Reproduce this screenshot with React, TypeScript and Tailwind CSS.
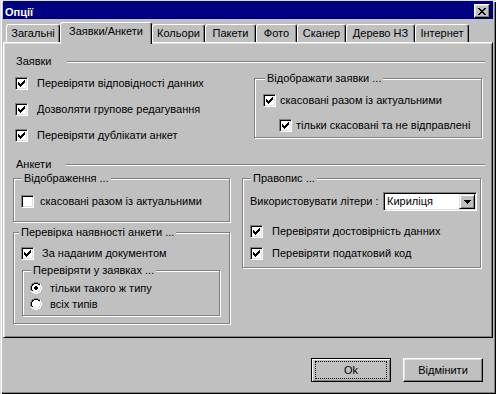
import React from 'react'

const CHECK = ['......X', '.....XX', 'X...XXX', 'XX.XXX.', 'XXXXX..', '.XXX...', '..X....']
const CLOSE = ['XX....XX', '.XX..XX.', '..XXXX..', '...XX...', '..XXXX..', '.XX..XX.', 'XX....XX']
const ARROW = ['XXXXXXX', '.XXXXX.', '..XXX..', '...X...']
const RADIO = [
  '....GGGG....',
  '..GGKKKKGG..',
  '.GKKwwwwKKW.',
  '.GKwwwwwwLW.',
  'GKwwwwwwwwLW',
  'GKwwwwwwwwLW',
  'GKwwwwwwwwLW',
  'GKwwwwwwwwLW',
  '.GKwwwwwwLW.',
  '.WLLwwwwLLW.',
  '..WWLLLLWW..',
  '....WWWW....'
]
const DOT = ['.XX.', 'XXXX', 'XXXX', '.XX.']

function Pixels ({ rows, colors, className = '' }: { rows: string[], colors: Record<string, string>, className?: string }): React.JSX.Element {
  const w = rows[0].length
  const h = rows.length
  return (
    <svg width={w} height={h} viewBox={`0 0 ${w} ${h}`} shapeRendering="crispEdges" className={`block shrink-0 ${className}`}>
      {rows.flatMap((r, y) => r.split('').map((c, x) => colors[c] !== undefined
        ? <rect key={`${x}-${y}`} x={x} y={y} width={1} height={1} fill={colors[c]} />
        : null))}
    </svg>
  )
}

function CheckBox ({ checked, label, gap }: { checked: boolean, label: string, gap: string }): React.JSX.Element {
  return (
    <div className="flex items-center h-[13px]">
      <span className="w-[13px] h-[13px] shrink-0 bg-white border border-t-[#808080] border-l-[#808080] border-b-white border-r-white shadow-[inset_1px_1px_#000,inset_-1px_-1px_#dfdfdf] flex items-center justify-center">
        {checked && <Pixels rows={CHECK} colors={{ X: '#000' }} />}
      </span>
      <span className={`leading-[13px] whitespace-nowrap ${gap}`}>{label}</span>
    </div>
  )
}

function Radio ({ checked, label }: { checked: boolean, label: string }): React.JSX.Element {
  return (
    <div className="flex items-center h-[12px]">
      <span className="relative w-[12px] h-[12px] shrink-0">
        <Pixels rows={RADIO} colors={{ G: '#808080', K: '#000', W: '#fff', L: '#dfdfdf', w: '#fff' }} />
        {checked && <Pixels rows={DOT} colors={{ X: '#000' }} className="absolute left-[4px] top-[4px]" />}
      </span>
      <span className="leading-[13px] whitespace-nowrap ml-[8px]">{label}</span>
    </div>
  )
}

function Group ({ label, labelLeft, className, children }: { label: string, labelLeft: string, className: string, children?: React.ReactNode }): React.JSX.Element {
  return (
    <div className={`relative border border-[#808080] shadow-[inset_1px_1px_#fff,1px_1px_#fff] ${className}`}>
      <span className={`absolute -top-[7px] px-[2px] bg-[#c0c0c0] leading-[13px] whitespace-nowrap ${labelLeft}`}>{label}</span>
      {children}
    </div>
  )
}

function Section ({ label, className }: { label: string, className: string }): React.JSX.Element {
  return (
    <div className={`flex items-center h-[13px] ml-[12px] mr-[7px] ${className}`}>
      <span className="leading-[13px]">{label}</span>
      <div className="flex-1 ml-[15px] h-[2px] border-t border-t-[#808080] border-b border-b-white" />
    </div>
  )
}

const tabs = [
  { label: 'Загальні', w: 'w-[54px]' },
  { label: 'Заявки/Анкети', w: 'w-[92px]', active: true },
  { label: 'Кольори', w: 'w-[53px]' },
  { label: 'Пакети', w: 'w-[51px]' },
  { label: 'Фото', w: 'w-[41px]' },
  { label: 'Сканер', w: 'w-[49px]' },
  { label: 'Дерево НЗ', w: 'w-[69px]' },
  { label: 'Інтернет', w: 'w-[54px]' }
]

export default function App (): React.JSX.Element {
  return (
    <div className="w-[496px] h-[394px] bg-[#c0c0c0] flex flex-col pt-[1px] px-[3px] text-[11px] text-black font-['Liberation_Sans',Arial,sans-serif] shadow-[inset_1px_1px_#dfdfdf,inset_2px_2px_#fff,inset_-1px_-1px_#000,inset_-2px_-2px_#808080]">
      {/* title */}
      <div className="h-[18px] bg-[#000080] flex items-center justify-between pl-[2px] pr-[3px]">
        <span className="self-end leading-[13px] font-bold text-white">Опції</span>
        <span className="w-[16px] h-[14px] mt-[2px] bg-[#c0c0c0] border border-t-white border-l-white border-b-black border-r-black shadow-[inset_-1px_-1px_#808080,inset_1px_1px_#dfdfdf] flex items-center justify-center">
          <Pixels rows={CLOSE} colors={{ X: '#000' }} />
        </span>
      </div>

      {/* tabs */}
      <div className="mt-[3px] h-[20px] flex items-end pl-[3px]">
        {tabs.map(t => (
          <div
            key={t.label}
            className={`${t.w} flex justify-center items-start pt-[2px] bg-[#c0c0c0] border-l border-t border-r border-l-white border-t-white border-r-black rounded-t-[3px] shadow-[inset_-1px_0_#808080] ${t.active === true ? 'relative z-10 h-[22px] -mb-[2px]' : 'h-[18px]'}`}
          >
            <span className="leading-[13px] whitespace-nowrap">{t.label}</span>
          </div>
        ))}
      </div>

      {/* panel */}
      <div className="h-[296px] flex flex-col border border-t-white border-l-white border-b-black border-r-black shadow-[inset_1px_1px_#dfdfdf,inset_-1px_-1px_#808080]">
        <Section label="Заявки" className="mt-[12px]" />
        <div className="flex h-[65px] mt-[9px]">
          <div className="ml-[11px] w-[239px] flex flex-col gap-[13px]">
            <CheckBox checked label="Перевіряти відповідності данних" gap="ml-[9px]" />
            <CheckBox checked label="Дозволяти групове редагування" gap="ml-[9px]" />
            <CheckBox checked label="Перевіряти дублікати анкет" gap="ml-[9px]" />
          </div>
          <Group label="Відображати заявки ..." labelLeft="left-[10px]" className="w-[228px] h-[60px] mt-[1px] pl-[8px] pt-[15px]">
            <CheckBox checked label="скасовані разом із актуальними" gap="ml-[4px]" />
            <div className="ml-[16px] mt-[12px]">
              <CheckBox checked label="тільки скасовані та не відправлені" gap="ml-[4px]" />
            </div>
          </Group>
        </div>

        <Section label="Анкети" className="mt-[16px]" />
        <div className="flex mt-[7px]">
          <div className="ml-[9px] w-[217px] flex flex-col gap-[10px]">
            <Group label="Відображення ..." labelLeft="left-[8px]" className="h-[44px] pl-[7px] pt-[16px]">
              <CheckBox checked={false} label="скасовані разом із актуальними" gap="ml-[6px]" />
            </Group>
            <Group label="Перевірка наявності анкети ..." labelLeft="left-[5px]" className="h-[92px] pl-[7px] pt-[14px]">
              <CheckBox checked label="За наданим документом" gap="ml-[8px]" />
              <Group label="Перевіряти у заявках ..." labelLeft="left-[8px]" className="w-[198px] h-[46px] ml-[1px] mt-[10px] pl-[7px] pt-[11px]">
                <div className="flex flex-col gap-[4px]">
                  <Radio checked label="тільки такого ж типу" />
                  <Radio checked={false} label="всіх типів" />
                </div>
              </Group>
            </Group>
          </div>
          <Group label="Правопис ..." labelLeft="left-[8px]" className="ml-[12px] w-[239px] h-[90px] pl-[7px] pr-[3px] pt-[13px]">
            <div className="flex items-center justify-between">
              <span className="leading-[13px] whitespace-nowrap">Використовувати літери :</span>
              <div className="w-[94px] h-[19px] bg-white flex items-center border border-t-[#808080] border-l-[#808080] border-b-white border-r-white shadow-[inset_1px_1px_#000,inset_-1px_-1px_#dfdfdf] pl-[3px] pr-[1px]">
                <span className="flex-1 leading-[13px]">Кириліця</span>
                <span className="w-[16px] h-[15px] bg-[#c0c0c0] border border-t-[#dfdfdf] border-l-[#dfdfdf] border-b-black border-r-black shadow-[inset_1px_1px_#fff,inset_-1px_-1px_#808080] flex items-center justify-center">
                  <Pixels rows={ARROW} colors={{ X: '#000' }} />
                </span>
              </div>
            </div>
            <div className="mt-[14px] flex flex-col gap-[9px]">
              <CheckBox checked label="Перевіряти достовірність данних" gap="ml-[9px]" />
              <CheckBox checked label="Перевіряти податковий код" gap="ml-[9px]" />
            </div>
          </Group>
        </div>
      </div>

      {/* buttons */}
      <div className="flex justify-end gap-[12px] mt-[20px] pr-[10px]">
        <button className="w-[80px] h-[24px] bg-[#c0c0c0] border border-black shadow-[inset_1px_1px_#fff,inset_-1px_-1px_#808080] px-[3px] py-[2px] flex">
          <span className="flex-1 border border-dotted border-black flex items-center justify-center leading-[13px]">Ok</span>
        </button>
        <button className="w-[80px] h-[24px] bg-[#c0c0c0] border border-t-white border-l-white border-b-black border-r-black shadow-[inset_-1px_-1px_#808080,inset_1px_1px_#dfdfdf] flex items-center justify-center leading-[13px]">
          Відмінити
        </button>
      </div>
    </div>
  )
}
